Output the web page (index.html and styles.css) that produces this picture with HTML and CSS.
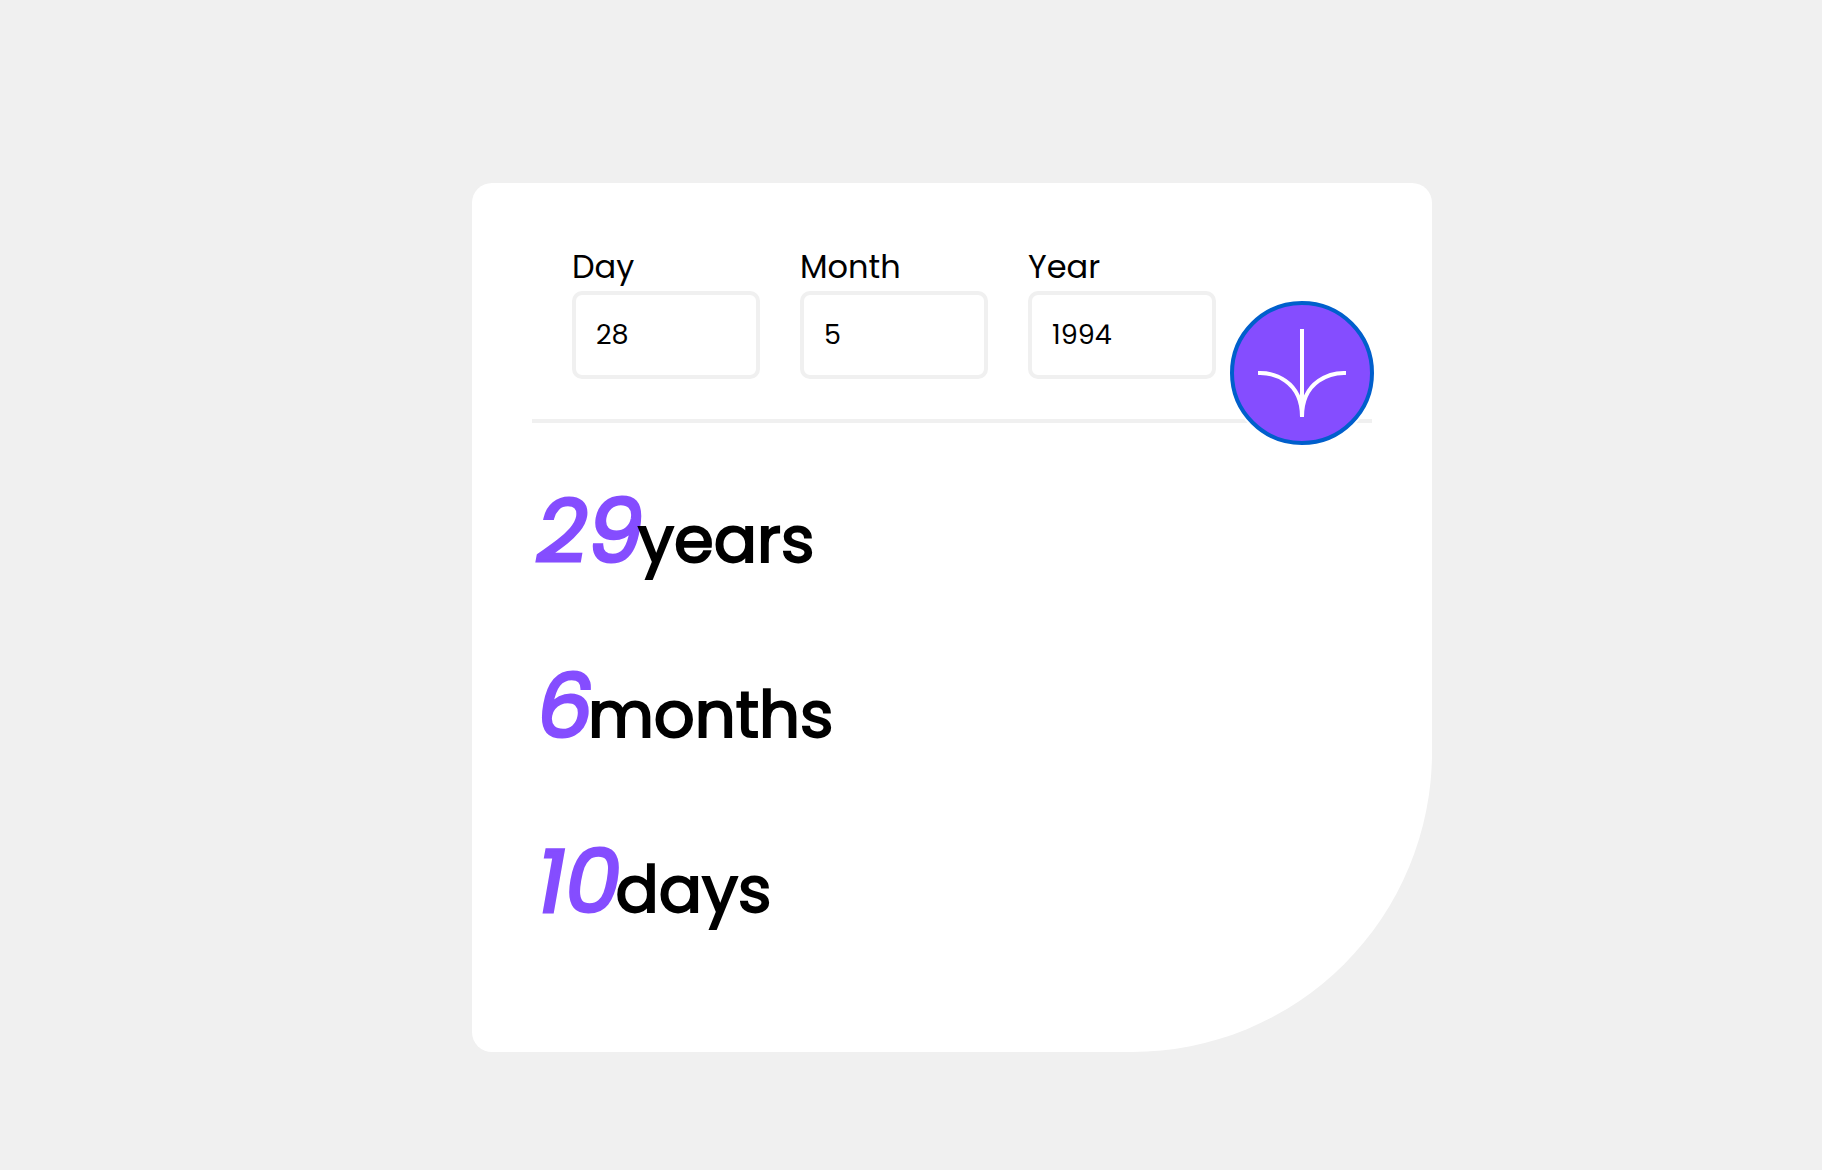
FILE: index.html
```html
<!DOCTYPE html>
<html lang="en">
<head>
  <meta charset="utf-8">
  <meta name="viewport" content="width=device-width, initial-scale=1">
  <title>Age calculator</title>
  <link rel="stylesheet" href="styles.css">
</head>
<body>
  <main class="card">
    <form class="form">
      <div class="field">
        <label class="label" for="day">Day</label>
        <input class="input" id="day" type="text" inputmode="numeric" value="28">
      </div>
      <div class="field">
        <label class="label" for="month">Month</label>
        <input class="input" id="month" type="text" inputmode="numeric" value="5">
      </div>
      <div class="field">
        <label class="label" for="year">Year</label>
        <input class="input" id="year" type="text" inputmode="numeric" value="1994">
      </div>
      <button class="submit" type="button" aria-label="Calculate age">
        <svg class="arrow" viewBox="0 0 44 44" fill="none" stroke="currentColor" stroke-width="2" aria-hidden="true">
          <path d="M0 22.02C7.333 21.69 22 25.62 22 44M22 44V0M44 22.02C36.667 21.69 22 25.62 22 44"/>
        </svg>
      </button>
    </form>
    <section class="results">
      <p class="result"><em class="number">29</em>years</p>
      <p class="result"><em class="number">6</em>months</p>
      <p class="result"><em class="number">10</em>days</p>
    </section>
  </main>
</body>
</html>
```
FILE: styles.css
```css
* {
  box-sizing: border-box;
}

body {
  margin: 0;
  min-height: 100vh;
  display: flex;
  align-items: center;
  justify-content: center;
  padding: 64px 0 0 82px;
  background: #f0f0f0;
  color: #000;
  font-family: Poppins, Inter, "Open Sans", sans-serif;
}

.card {
  width: 100%;
  max-width: 960px;
  padding: 60px 60px 75px;
  border-radius: 20px 20px 300px 20px;
  background: #fff;
}

.form {
  position: relative;
  display: flex;
  gap: 40px;
  padding: 0 0 40px 40px;
  border-bottom: 4px solid #f0f0f0;
}

.field {
  display: flex;
  flex-direction: column;
  width: 188px;
}

.label {
  font-size: 32px;
  line-height: 48px;
}

.input {
  width: 100%;
  height: 88px;
  padding: 0 20px;
  border: 4px solid #f0f0f0;
  border-radius: 10px;
  background: #fff;
  color: inherit;
  font: inherit;
  font-size: 27px;
}

.submit {
  position: absolute;
  right: -2px;
  bottom: -26px;
  display: grid;
  place-items: center;
  width: 144px;
  height: 144px;
  padding: 0;
  border: 4px solid #005fcc;
  border-radius: 50%;
  background: #854dff;
  color: #fff;
  box-shadow: 0 0 0 2px #fff;
}

.arrow {
  width: 88px;
  height: 88px;
}

.results {
  padding-top: 29px;
}

.result {
  margin: 0;
  font-size: 64px;
  font-weight: 400;
  line-height: 175px;
  -webkit-text-stroke: 2px currentColor;
}

/* The slanted digits lean into the unit that follows them. */
.number {
  margin: 0 -5px 0 5px;
  color: #854dff;
  font-size: 88px;
  line-height: 1;
  -webkit-text-stroke: 3px currentColor;
}
```
